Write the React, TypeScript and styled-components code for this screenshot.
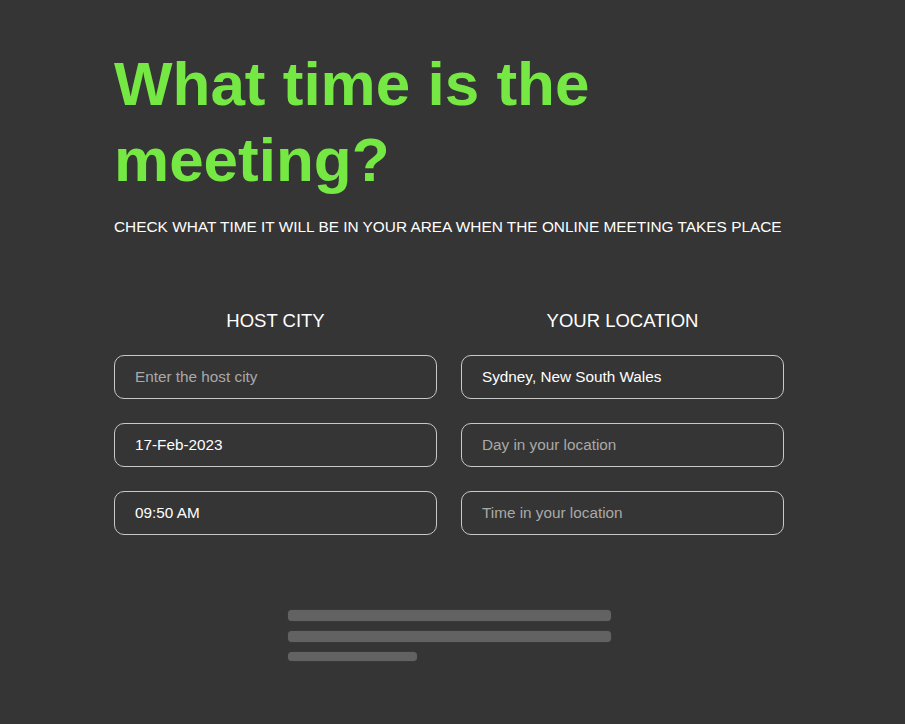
import { FC } from "react";
import styled, { createGlobalStyle } from "styled-components";

const GlobalStyle = createGlobalStyle`
  html, body {
    margin: 0;
    padding: 0;
    background: #353535;
  }
  body {
    font-family: "Liberation Sans", Arial, sans-serif;
    color: #ffffff;
  }
`;

const Page = styled.div`
  min-height: 724px;
  background: #353535;
  overflow: hidden;
`;

const Container = styled.main`
  width: 670px;
  margin-left: 114px;
  padding-top: 46px;
`;

const Title = styled.h1`
  margin: 0;
  font-size: 62px;
  line-height: 76px;
  font-weight: 700;
  color: #76e843;
`;

const Subtitle = styled.p`
  margin: 20px 0 0;
  font-size: 15.4px;
  line-height: 18px;
  text-transform: uppercase;
  white-space: nowrap;
  color: #ffffff;
`;

const Columns = styled.section`
  display: grid;
  grid-template-columns: 1fr 1fr;
  column-gap: 24px;
  margin-top: 74px;
`;

const Column = styled.div`
  display: flex;
  flex-direction: column;
  gap: 24px;
`;

const ColumnTitle = styled.h2`
  margin: 0;
  font-size: 18.5px;
  line-height: 21px;
  font-weight: 400;
  text-align: center;
  text-transform: uppercase;
`;

const Field = styled.input`
  box-sizing: border-box;
  width: 100%;
  height: 44px;
  padding: 0 20px;
  border: 1px solid #c8c8c8;
  border-radius: 10px;
  background: transparent;
  color: #ffffff;
  font-family: "Liberation Sans", Arial, sans-serif;
  font-size: 15.3px;
  outline: none;

  &::placeholder {
    color: #a9a9a9;
  }
`;

const Skeleton = styled.div`
  width: 323px;
  margin: 75px auto 0;
  display: flex;
  flex-direction: column;
  gap: 10px;
`;

const Bar = styled.div<{ $short?: boolean }>`
  height: ${(p) => (p.$short ? "9px" : "11px")};
  width: ${(p) => (p.$short ? "129px" : "100%")};
  border-radius: 4px;
  background: #626262;
  box-shadow: 0 0 1px #5a5a5a;
`;

const App: FC = () => {
  return (
    <Page>
      <GlobalStyle />
      <Container>
        <Title>What time is the meeting?</Title>
        <Subtitle>
          Check what time it will be in your area when the online meeting takes place
        </Subtitle>
        <Columns>
          <Column>
            <ColumnTitle>Host City</ColumnTitle>
            <Field placeholder="Enter the host city" />
            <Field defaultValue="17-Feb-2023" />
            <Field defaultValue="09:50 AM" />
          </Column>
          <Column>
            <ColumnTitle>Your Location</ColumnTitle>
            <Field defaultValue="Sydney, New South Wales" />
            <Field placeholder="Day in your location" readOnly />
            <Field placeholder="Time in your location" readOnly />
          </Column>
        </Columns>
        <Skeleton>
          <Bar />
          <Bar />
          <Bar $short />
        </Skeleton>
      </Container>
    </Page>
  );
};

export default App;
